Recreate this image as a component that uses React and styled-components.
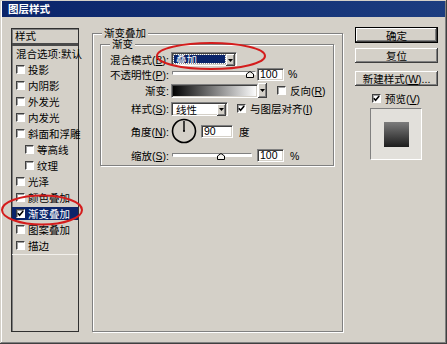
import React from 'react';
import styled, { createGlobalStyle } from 'styled-components';

const GlobalStyle = createGlobalStyle`
  html, body {
    margin: 0;
    padding: 0;
    background: #d4d0c8;
  }
  body {
    font-family: "Liberation Sans", "Noto Sans CJK SC", sans-serif;
    font-size: 10.5px;
    color: #000;
  }
`;

const styleItems = [
  { label: '投影' },
  { label: '内阴影' },
  { label: '外发光' },
  { label: '内发光' },
  { label: '斜面和浮雕' },
  { label: '等高线', indent: true },
  { label: '纹理', indent: true },
  { label: '光泽' },
  { label: '颜色叠加' },
  { label: '渐变叠加', checked: true, selected: true },
  { label: '图案叠加' },
  { label: '描边' },
];

const Check = ({ checked }) => (
  <CheckBox>
    {checked && (
      <svg width="7" height="7" viewBox="0 0 7 7">
        <path d="M0.8 3.2 L2.6 5.2 L6.2 1" fill="none" stroke="#000" strokeWidth="1.6" />
      </svg>
    )}
  </CheckBox>
);

const ArrowButton = () => (
  <DropButton>
    <svg width="5" height="3" viewBox="0 0 5 3">
      <path d="M0 0 H5 L2.5 3 Z" fill="#000" />
    </svg>
  </DropButton>
);

const Slider = ({ width, value }) => (
  <SliderWrap style={{ width }}>
    <Track />
    <Thumb style={{ left: `calc(${value}% - 4px)` }}>
      <svg width="8" height="7" viewBox="0 0 8 7">
        <path d="M0.5 6.5 V3 L4 0.5 L7.5 3 V6.5 Z" fill="#f4f2ee" stroke="#000" strokeWidth="1" />
      </svg>
    </Thumb>
  </SliderWrap>
);

const App = () => {
  return (
    <>
      <GlobalStyle />
      <Window>
        <TitleBar>图层样式</TitleBar>
        <Body>
          <StyleList>
            <ListHeader>样式</ListHeader>
            <ListRow>混合选项:默认</ListRow>
            {styleItems.map(item => (
              <ListRow key={item.label} $indent={item.indent} $selected={item.selected}>
                <Check checked={item.checked} />
                <span>{item.label}</span>
              </ListRow>
            ))}
            <ListEnd />
          </StyleList>

          <OuterGroup>
            <Legend $ml={2}>渐变叠加</Legend>
            <InnerGroup>
              <Legend $ml={9}>渐变</Legend>

              <Row $h={16} $mt={1}>
                <Label>混合模式(<u>B</u>):</Label>
                <Select $w={66}>
                  <SelectText $highlight>叠加</SelectText>
                  <ArrowButton />
                </Select>
              </Row>

              <Row $h={14} $mt={0}>
                <Label>不透明性(<u>P</u>):</Label>
                <Spacer $w={2} />
                <Slider width={84} value={93} />
                <Field $w={27} $ml={1}>100</Field>
                <Unit $ml={4}>%</Unit>
              </Row>

              <Row $h={15} $mt={2}>
                <Label>渐变:</Label>
                <GradientBox />
                <ArrowButton />
                <Spacer $w={10} />
                <Check />
                <Text $ml={4}>反向(<u>R</u>)</Text>
              </Row>

              <Row $h={15} $mt={3}>
                <Label>样式(<u>S</u>):</Label>
                <Select $w={57}>
                  <SelectText>线性</SelectText>
                  <ArrowButton />
                </Select>
                <Spacer $w={9} />
                <Check checked />
                <Text $ml={4}>与图层对齐(<u>I</u>)</Text>
              </Row>

              <Row $h={26} $mt={2}>
                <Label>角度(<u>N</u>):</Label>
                <Dial width="26" height="26" viewBox="0 0 26 26">
                  <circle cx="13" cy="13" r="11.5" fill="none" stroke="#000" strokeWidth="1.6" />
                  <line x1="13" y1="13" x2="13" y2="3" stroke="#000" strokeWidth="1.4" />
                  <circle cx="13" cy="13" r="1" fill="#000" />
                </Dial>
                <Field $w={32} $ml={4}>90</Field>
                <Unit $ml={6}>度</Unit>
              </Row>

              <Row $h={15} $mt={4}>
                <Label>缩放(<u>S</u>):</Label>
                <Spacer $w={2} />
                <Slider width={80} value={61} />
                <Field $w={27} $ml={5}>100</Field>
                <Unit $ml={6}>%</Unit>
              </Row>
            </InnerGroup>
          </OuterGroup>

          <Side>
            <Button $default>确定</Button>
            <Button $mt={5}>复位</Button>
            <Button $mt={8}>新建样式(<u>W</u>)...</Button>
            <PreviewToggle>
              <Check checked />
              <Text $ml={4}>预览(<u>V</u>)</Text>
            </PreviewToggle>
            <PreviewBox>
              <Swatch />
            </PreviewBox>
          </Side>
        </Body>

        <Mark width="112" height="30" viewBox="0 0 112 30" style={{ left: 155, top: 41 }}>
          <ellipse cx="56" cy="15" rx="54" ry="13" fill="none" stroke="#d41c1c" strokeWidth="2" />
        </Mark>
        <Mark width="84" height="34" viewBox="0 0 84 34" style={{ left: 0, top: 193 }}>
          <ellipse cx="42" cy="17" rx="40" ry="14.5" fill="none" stroke="#d41c1c" strokeWidth="2" />
        </Mark>
      </Window>
    </>
  );
};

export default App;

const Window = styled.div`
  position: relative;
  width: 447px;
  height: 344px;
  box-sizing: border-box;
  padding: 1px 2px 2px 2px;
  background: #d4d0c8;
  box-shadow: inset -1px -1px #404040, inset 1px 1px #d4d0c8, inset -2px -2px #808080,
    inset 2px 2px #fff;
  overflow: hidden;
`;

const TitleBar = styled.div`
  height: 16px;
  line-height: 16px;
  padding-left: 6px;
  background: linear-gradient(to right, #0a246a, #1c3d80);
  color: #fff;
  font-weight: bold;
  font-size: 10.5px;
`;

const Body = styled.div`
  display: flex;
  align-items: flex-start;
`;

const StyleList = styled.div`
  width: 68px;
  height: 304px;
  margin: 11px 0 0 9px;
  box-sizing: border-box;
  border: 1px solid #303030;
  box-shadow: inset 1px 1px #808080;
  display: flex;
  flex-direction: column;
`;

const ListHeader = styled.div`
  height: 14px;
  line-height: 14px;
  padding-left: 3px;
  border-bottom: 3px solid #4a4a4a;
`;

const ListRow = styled.div`
  display: flex;
  align-items: center;
  gap: 3px;
  height: 16px;
  box-sizing: border-box;
  padding-left: ${p => (p.$indent ? 13 : 4)}px;
  white-space: nowrap;
  border-top: 1px solid transparent;
  border-bottom: 2px solid transparent;
  background-clip: padding-box;
  background-color: ${p => (p.$selected ? '#0a246a' : 'transparent')};
  color: ${p => (p.$selected ? '#fff' : '#000')};
  &:first-of-type {
    padding-left: 3px;
  }
`;

const ListEnd = styled.div`
  height: 0;
  border-top: 1px solid #f2f0ec;
`;

const CheckBox = styled.span`
  display: inline-flex;
  align-items: center;
  justify-content: center;
  flex: none;
  width: 9px;
  height: 9px;
  box-sizing: border-box;
  background: #fff;
  border-top: 1px solid #404040;
  border-left: 1px solid #404040;
  border-right: 1px solid #fff;
  border-bottom: 1px solid #fff;
  box-shadow: inset 1px 1px #a0a0a0;
`;

const OuterGroup = styled.fieldset`
  width: 251px;
  height: 305px;
  box-sizing: border-box;
  margin: 10px 0 0 13px;
  padding: 0 6px 0 7px;
  border: 1px solid #808080;
  box-shadow: inset 1px 1px #fff, 1px 1px #fff;
  min-inline-size: 0;
`;

const Legend = styled.legend`
  margin-left: ${p => p.$ml}px;
  padding: 0 2px;
  line-height: 12px;
  background: #d4d0c8;
`;

const InnerGroup = styled.fieldset`
  width: 234px;
  box-sizing: border-box;
  margin: -1px 0 0 0;
  padding: 0 0 2px 0;
  border: 1px solid #808080;
  box-shadow: inset 1px 1px #fff, 1px 1px #fff;
  min-inline-size: 0;
`;

const Row = styled.div`
  display: flex;
  align-items: center;
  height: ${p => p.$h}px;
  margin-top: ${p => p.$mt}px;
  white-space: nowrap;
`;

const Label = styled.span`
  width: 69px;
  flex: none;
  text-align: right;
  padding-right: 1px;
  box-sizing: border-box;
`;

const Spacer = styled.span`
  width: ${p => p.$w}px;
  flex: none;
`;

const Text = styled.span`
  margin-left: ${p => p.$ml || 0}px;
`;

const Unit = styled.span`
  margin-left: ${p => p.$ml}px;
`;

const sunken = `
  box-sizing: border-box;
  border-top: 1px solid #808080;
  border-left: 1px solid #808080;
  border-right: 1px solid #fff;
  border-bottom: 1px solid #fff;
  box-shadow: inset 1px 1px #404040, inset -1px -1px #d4d0c8;
`;

const Select = styled.div`
  ${sunken};
  display: flex;
  align-items: stretch;
  width: ${p => p.$w}px;
  height: 14px;
  margin-left: 1px;
  background: #fff;
  padding: 1px;
`;

const SelectText = styled.span`
  flex: 1;
  line-height: 10px;
  padding-left: 2px;
  margin: 1px 1px 1px 1px;
  background: ${p => (p.$highlight ? '#0a246a' : '#fff')};
  color: ${p => (p.$highlight ? '#fff' : '#000')};
  outline: ${p => (p.$highlight ? '1px dotted #8a8a8a' : 'none')};
`;

const DropButton = styled.span`
  display: flex;
  align-items: center;
  justify-content: center;
  flex: none;
  width: 9px;
  align-self: stretch;
  min-height: 12px;
  background: #d4d0c8;
  box-shadow: inset -1px -1px #404040, inset 1px 1px #fff, inset -2px -2px #808080;
`;

const SliderWrap = styled.div`
  position: relative;
  height: 14px;
  flex: none;
`;

const Track = styled.div`
  ${sunken};
  margin-top: 4px;
  height: 4px;
  background: #fff;
  box-shadow: none;
`;

const Thumb = styled.span`
  position: absolute;
  top: 4px;
  line-height: 0;
`;

const Field = styled.div`
  ${sunken};
  width: ${p => p.$w}px;
  height: 13px;
  line-height: 11px;
  margin-left: ${p => p.$ml}px;
  padding-left: 2px;
  background: #fff;
  flex: none;
`;

const GradientBox = styled.div`
  ${sunken};
  width: 87px;
  height: 14px;
  margin-left: 1px;
  background: linear-gradient(to right, #000, #fff);
  flex: none;
`;

const Dial = styled.svg`
  flex: none;
  margin-left: 1px;
  display: block;
`;

const Side = styled.div`
  width: 83px;
  margin: 10px 0 0 12px;
  display: flex;
  flex-direction: column;
`;

const Button = styled.div`
  height: ${p => (p.$default ? 16 : 15)}px;
  margin-top: ${p => p.$mt || 0}px;
  box-sizing: border-box;
  display: flex;
  align-items: center;
  justify-content: center;
  white-space: nowrap;
  background: #d4d0c8;
  border: ${p => (p.$default ? '1px solid #000' : 'none')};
  box-shadow: inset -1px -1px #404040, inset 1px 1px #fff, inset -2px -2px #808080;
`;

const PreviewToggle = styled.div`
  display: flex;
  align-items: center;
  height: 12px;
  margin-top: 6px;
  padding-left: 17px;
`;

const PreviewBox = styled.div`
  ${sunken};
  width: 52px;
  height: 52px;
  margin: 4px 0 0 15px;
  background: #e2e0db;
  box-shadow: none;
  display: flex;
  align-items: center;
  justify-content: center;
`;

const Swatch = styled.div`
  width: 25px;
  height: 25px;
  background: linear-gradient(to bottom, #7c7c7c, #1c1c1c);
`;

const Mark = styled.svg`
  position: absolute;
  pointer-events: none;
`;
